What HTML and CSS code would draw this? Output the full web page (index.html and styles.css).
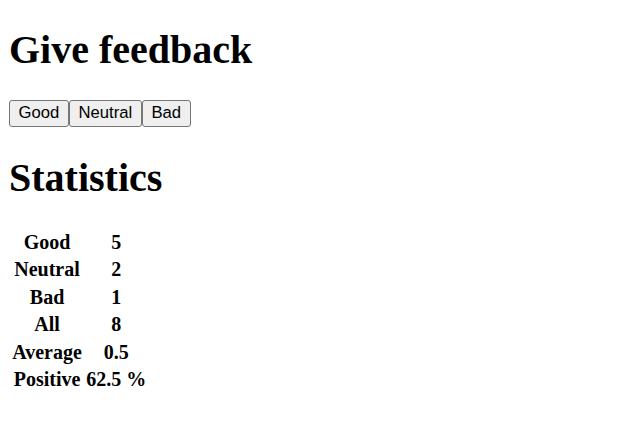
FILE: index.html
```html
<!DOCTYPE html>
<html>
<head>
<meta charset="utf-8">
<link rel="stylesheet" href="styles.css">
</head>
<body>
<div class="app">
<h1 class="title first">Give feedback</h1>
<div class="buttons"><button class="btn">Good</button><button class="btn">Neutral</button><button class="btn">Bad</button></div>
<h1 class="title">Statistics</h1>
<table class="stats">
<tbody>
<tr><th>Good</th><th>5</th></tr>
<tr><th>Neutral</th><th>2</th></tr>
<tr><th>Bad</th><th>1</th></tr>
<tr><th>All</th><th>8</th></tr>
<tr><th>Average</th><th>0.5</th></tr>
<tr><th>Positive</th><th>62.5 %</th></tr>
</tbody>
</table>
</div>
</body>
</html>
```
FILE: styles.css
```css
html, body {
  background: #fff;
  color: #000;
}
body {
  margin: 0 9px;
  font-family: "Liberation Serif", "Times New Roman", serif;
  font-size: 20px;
}
.title {
  font-size: 40px;
  font-weight: bold;
  margin: 26.8px 0;
}
.title.first {
  margin-top: 26px;
}
.buttons {
  display: flex;
}
.btn {
  font-family: "Liberation Sans", Arial, sans-serif;
  font-size: 16.67px;
  padding: 2.5px 8.6px;
  margin: 0;
  background: #efefef;
  color: #000;
  border: 1px solid #767676;
  border-radius: 3px;
  line-height: normal;
}
.stats {
  border-collapse: separate;
  border-spacing: 2.5px;
  font-size: 20px;
}
.stats th {
  padding: 1.25px;
  font-weight: bold;
  text-align: center;
}
```
